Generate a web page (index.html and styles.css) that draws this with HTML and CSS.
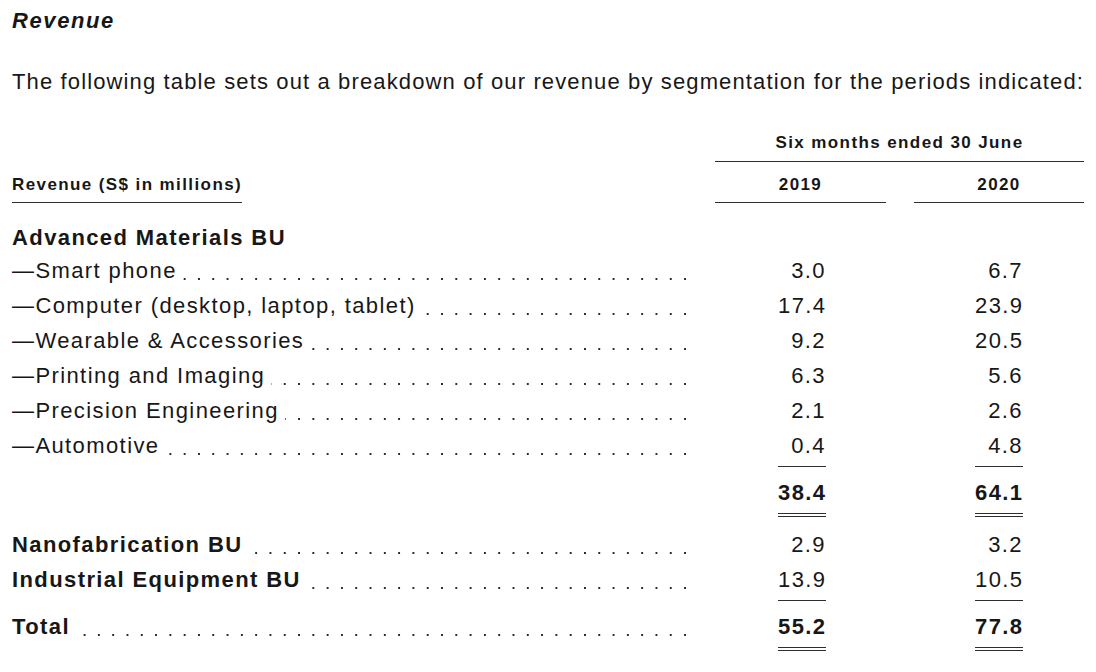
FILE: index.html
```html
<!DOCTYPE html>
<html lang="en">
<head>
<meta charset="utf-8">
<title>Revenue</title>
<link rel="stylesheet" href="styles.css">
</head>
<body>
<div class="page">
  <h2 class="title">Revenue</h2>
  <p class="intro">The following table sets out a breakdown of our revenue by segmentation for the periods indicated:</p>
  <div class="table">
    <div class="row period">
      <div class="label"></div>
      <div class="period-head">Six months ended 30 June</div>
    </div>
    <div class="row head">
      <div class="label"><span class="head-label">Revenue (S$ in millions)</span></div>
      <div class="year">2019</div>
      <div class="year">2020</div>
    </div>
    <div class="row group">
      <div class="label"><span class="text bold">Advanced Materials BU</span></div>
    </div>
    <div class="row item first">
      <div class="label leader"><span class="text">—Smart phone</span></div>
      <div class="val"><span class="num">3.0</span></div>
      <div class="val v2"><span class="num">6.7</span></div>
    </div>
    <div class="row item">
      <div class="label leader"><span class="text">—Computer (desktop, laptop, tablet)</span></div>
      <div class="val"><span class="num">17.4</span></div>
      <div class="val v2"><span class="num">23.9</span></div>
    </div>
    <div class="row item">
      <div class="label leader"><span class="text">—Wearable &amp; Accessories</span></div>
      <div class="val"><span class="num">9.2</span></div>
      <div class="val v2"><span class="num">20.5</span></div>
    </div>
    <div class="row item">
      <div class="label leader"><span class="text">—Printing and Imaging</span></div>
      <div class="val"><span class="num">6.3</span></div>
      <div class="val v2"><span class="num">5.6</span></div>
    </div>
    <div class="row item">
      <div class="label leader"><span class="text">—Precision Engineering</span></div>
      <div class="val"><span class="num">2.1</span></div>
      <div class="val v2"><span class="num">2.6</span></div>
    </div>
    <div class="row item">
      <div class="label leader"><span class="text">—Automotive</span></div>
      <div class="val"><span class="num ul">0.4</span></div>
      <div class="val v2"><span class="num ul">4.8</span></div>
    </div>
    <div class="row sub">
      <div class="label"></div>
      <div class="val"><span class="num bold dbl">38.4</span></div>
      <div class="val v2"><span class="num bold dbl">64.1</span></div>
    </div>
    <div class="row bu first-bu">
      <div class="label leader"><span class="text bold">Nanofabrication BU</span></div>
      <div class="val"><span class="num">2.9</span></div>
      <div class="val v2"><span class="num">3.2</span></div>
    </div>
    <div class="row bu">
      <div class="label leader"><span class="text bold">Industrial Equipment BU</span></div>
      <div class="val"><span class="num ul">13.9</span></div>
      <div class="val v2"><span class="num ul">10.5</span></div>
    </div>
    <div class="row total">
      <div class="label leader"><span class="text bold tight">Total</span></div>
      <div class="val"><span class="num bold dbl">55.2</span></div>
      <div class="val v2"><span class="num bold dbl">77.8</span></div>
    </div>
  </div>
</div>
</body>
</html>
```

FILE: styles.css
```css
html, body {
  margin: 0;
  padding: 0;
  background: #ffffff;
}

body {
  color: #171717;
  font-family: "Liberation Sans", Arial, Helvetica, sans-serif;
}

.page {
  padding: 9px 12px 24px 12px;
}

.title {
  margin: 0;
  font-size: 22px;
  line-height: 24px;
  font-weight: bold;
  font-style: italic;
  letter-spacing: 1.6px;
}

.intro {
  margin: 37px 0 0 0;
  font-size: 22px;
  line-height: 24px;
  letter-spacing: 1.13px;
  white-space: nowrap;
}

.row {
  display: grid;
  grid-template-columns: 1fr 171px 170px;
  column-gap: 28px;
  height: 24px;
  line-height: 24px;
  font-size: 22px;
  letter-spacing: 1.4px;
}

.bold {
  font-weight: bold;
}

/* header rows */
.period {
  margin-top: 37px;
  font-size: 17px;
}

.period-head {
  grid-column: 2 / 4;
  align-self: start;
  text-align: center;
  font-weight: bold;
  padding-bottom: 6px;
  border-bottom: 1px solid #2e2e2e;
}

.head {
  margin-top: 18px;
  font-size: 17px;
  font-weight: bold;
}

.head-label {
  display: inline-block;
  padding-bottom: 5px;
  border-bottom: 1px solid #2e2e2e;
}

.year {
  align-self: start;
  text-align: center;
  padding-bottom: 5px;
  border-bottom: 1px solid #2e2e2e;
}

/* body rows */
.group {
  margin-top: 29px;
}

.item {
  margin-top: 11px;
}

.item.first {
  margin-top: 9px;
}

.sub {
  margin-top: 23px;
}

.bu {
  margin-top: 11px;
}

.bu.first-bu {
  margin-top: 28px;
}

.total {
  margin-top: 23px;
}

.label {
  min-width: 0;
  white-space: nowrap;
}

.leader {
  background-image: linear-gradient(to right, transparent 12.3px, #2a2a2a 12.3px);
  background-size: 14.3px 2px;
  background-repeat: repeat-x;
  background-position: right 1px top 19px;
}

.text {
  background: #ffffff;
  padding-right: 6px;
}

.text.tight {
  padding-right: 2px;
}

.val {
  display: flex;
  justify-content: flex-end;
  align-items: flex-start;
  padding-right: 60px;
}

.val.v2 {
  padding-right: 61px;
}

.num {
  display: inline-block;
  width: 48px;
  text-align: right;
}

.num.ul {
  padding-bottom: 8px;
  border-bottom: 1px solid #2e2e2e;
}

.num.dbl {
  padding-bottom: 8px;
  border-bottom: 4px double #2e2e2e;
}
```
